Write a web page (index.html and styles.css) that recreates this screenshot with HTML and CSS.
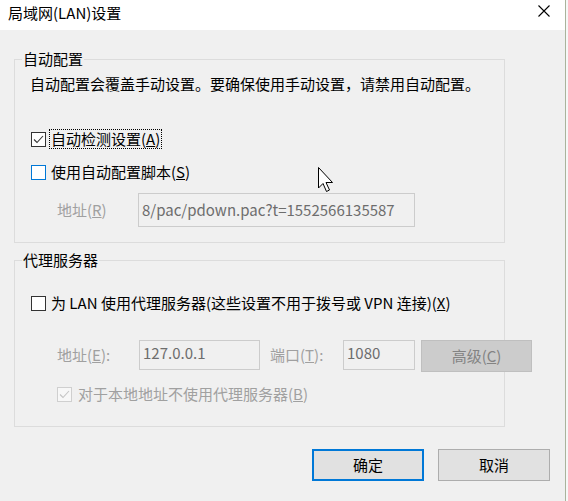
FILE: index.html
```html
<!DOCTYPE html>
<html lang="zh-CN">
<head>
    <meta charset="UTF-8">
    <title>局域网(LAN)设置</title>
    <link rel="stylesheet" href="styles.css">
</head>
<body>
    <div class="window">
        <div class="titlebar">
            <span class="title">局域网(LAN)设置</span>
            <svg class="close" width="12" height="12" viewBox="0 0 12 12">
                <path d="M0.5 0.5 L11.5 11.5 M11.5 0.5 L0.5 11.5" stroke="#000" stroke-width="1.1" fill="none"/>
            </svg>
        </div>

        <div class="content">
            <fieldset class="group group-auto">
                <legend>自动配置</legend>
                <p class="desc">自动配置会覆盖手动设置。要确保使用手动设置，请禁用自动配置。</p>

                <div class="check-row row-detect">
                    <span class="box checked">
                        <svg width="13" height="13" viewBox="0 0 13 13"><path d="M2 6.5 L5 9.5 L11 3" stroke="#333" stroke-width="1.1" fill="none"/></svg>
                    </span>
                    <span class="label focus">自动检测设置(<u>A</u>)</span>
                </div>

                <div class="check-row row-script">
                    <span class="box hover"></span>
                    <span class="label">使用自动配置脚本(<u>S</u>)</span>
                </div>

                <div class="field-row row-url">
                    <span class="field-label url-label">地址(<u>R</u>)</span>
                    <div class="textbox url">8/pac/pdown.pac?t=1552566135587</div>
                </div>
            </fieldset>

            <fieldset class="group group-proxy">
                <legend>代理服务器</legend>

                <div class="check-row row-proxy">
                    <span class="box"></span>
                    <span class="label">为 LAN 使用代理服务器(这些设置不用于拨号或 VPN 连接)(<u>X</u>)</span>
                </div>

                <div class="field-row row-addr">
                    <span class="field-label addr-label">地址(<u>E</u>):</span>
                    <div class="textbox addr">127.0.0.1</div>
                    <span class="field-label port-label">端口(<u>T</u>):</span>
                    <div class="textbox port">1080</div>
                    <button class="btn advanced" disabled>高级(<u>C</u>)</button>
                </div>

                <div class="check-row row-bypass">
                    <span class="box disabled">
                        <svg width="13" height="13" viewBox="0 0 13 13"><path d="M2 6.5 L5 9.5 L11 3" stroke="#c4c4c4" stroke-width="1.1" fill="none"/></svg>
                    </span>
                    <span class="label muted">对于本地地址不使用代理服务器(<u>B</u>)</span>
                </div>
            </fieldset>

            <div class="buttons">
                <button class="btn ok">确定</button>
                <button class="btn cancel">取消</button>
            </div>
        </div>

        <svg class="cursor" width="18" height="28" viewBox="0 0 18 28">
            <path d="M0.5 0.5 L0.5 21 L5 16.5 L8.5 24.5 L11.5 23 L8 15.5 L14.5 15.5 Z" fill="#fff" stroke="#000" stroke-width="1" stroke-linejoin="miter"/>
        </svg>
    </div>
</body>
</html>
```

FILE: styles.css
```css
html {
    background: #f7f7f7;
}

body {
    margin: 0;
    font-family: "Noto Sans CJK SC", "Noto Sans", sans-serif;
    font-size: 15px;
    line-height: 20px;
    color: #000;
}

.window {
    position: relative;
    width: 565px;
    height: 501px;
    background: #f0f0f0;
    border-right: 1px solid #a9b49c;
}

.titlebar {
    height: 30px;
    background: #fff;
    display: flex;
    justify-content: space-between;
    align-items: flex-start;
}

.title {
    padding: 3px 0 0 8px;
}

.close {
    margin: 5px 15px 0 0;
}

.content {
    padding: 0 60px 0 14px;
}

.group {
    margin: 0;
    padding: 0;
    border: 1px solid #dcdcdc;
    min-width: 0;
}

.group legend {
    margin-left: 7px;
    padding: 0 1px;
    line-height: 20px;
}

.group-auto {
    margin-top: 19px;
    padding-bottom: 15px;
}

.group-proxy {
    margin-top: 7px;
    padding-bottom: 22px;
}

.desc {
    margin: 5px 0 0 15px;
}

.check-row {
    display: flex;
    align-items: center;
    height: 20px;
    padding-left: 16px;
}

.box {
    width: 13px;
    height: 13px;
    border: 1px solid #333;
    background: #fff;
    display: flex;
    flex-shrink: 0;
}

.box.hover {
    border-color: #0078d7;
}

.box.disabled {
    border-color: #cfcfcf;
    background: #f7f7f7;
}

.label {
    margin-left: 4px;
    padding: 0 1px;
    white-space: nowrap;
}

.label.focus {
    outline: 1px dotted #000;
    outline-offset: -1px;
    padding: 0 2px;
    margin-left: 3px;
}

.muted,
.field-label {
    color: #a0a0a0;
}

.field-label {
    white-space: nowrap;
    flex-shrink: 0;
}

.row-detect {
    margin-top: 35px;
}

.row-script {
    margin-top: 13px;
}

.row-proxy {
    margin-top: 23px;
}

.row-bypass {
    margin-top: 12px;
    padding-left: 42px;
}

.row-bypass .label {
    margin-left: 5px;
}

.field-row {
    display: flex;
    align-items: center;
    padding-left: 42px;
}

.url-label {
    width: 81px;
}

.addr-label {
    width: 82px;
}

.row-url {
    margin-top: 11px;
}

.row-addr {
    margin-top: 27px;
    height: 32px;
    align-items: flex-start;
}

.row-addr .field-label {
    line-height: 30px;
}

.textbox {
    box-sizing: border-box;
    border: 1px solid #cccccc;
    background: #f0f0f0;
    color: #6d6d6d;
    padding: 0 3px;
    white-space: nowrap;
    overflow: hidden;
    flex-shrink: 0;
}

.url {
    width: 277px;
    height: 34px;
    line-height: 32px;
}

.addr {
    width: 121px;
    height: 30px;
    line-height: 24px;
}

.port-label {
    margin-left: 10px;
    width: 73px;
}

.port {
    width: 72px;
    height: 30px;
    line-height: 24px;
}

.btn {
    font: inherit;
    box-sizing: border-box;
    height: 32px;
    width: 112px;
    background: #e1e1e1;
    border: 1px solid #adadad;
    color: #000;
    padding: 0;
    flex-shrink: 0;
}

.advanced {
    margin-left: 6px;
    width: 111px;
    background: #cccccc;
    border-color: #bfbfbf;
    color: #838383;
}

.buttons {
    display: flex;
    justify-content: flex-end;
    gap: 14px;
    margin-top: 22px;
    margin-right: -45px;
}

.ok {
    border: 2px solid #0078d7;
}

.cursor {
    position: absolute;
    left: 318px;
    top: 167px;
}
```
